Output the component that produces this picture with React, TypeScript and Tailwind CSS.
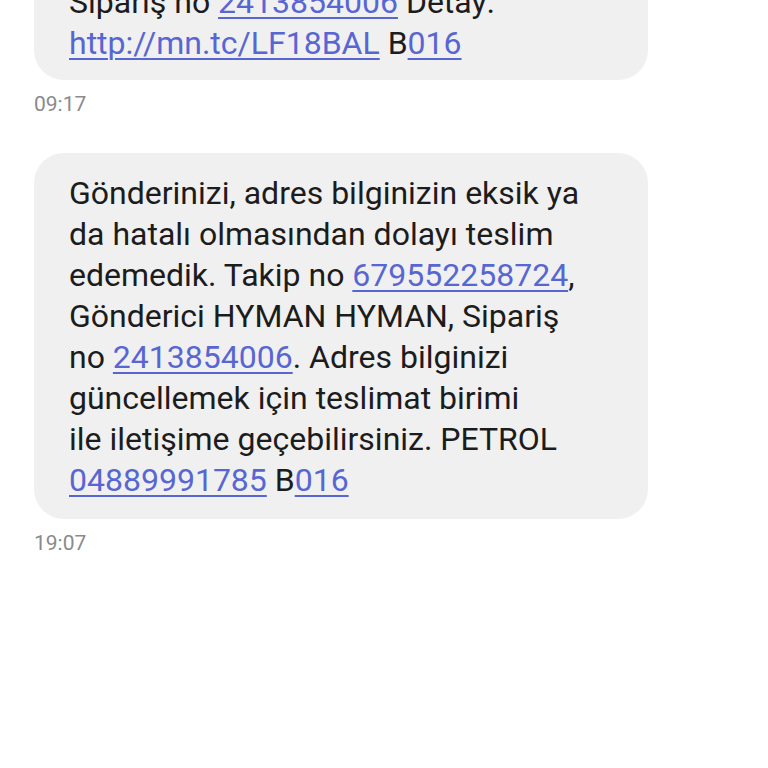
import React from "react";

const Link = ({ children }: { children: React.ReactNode }) => (
  <span className="text-[#5866d3] underline decoration-[1.5px] underline-offset-[4px]">
    {children}
  </span>
);

export default function App() {
  return (
    <div
      className="h-[768px] w-[768px] overflow-hidden bg-white text-[#1c1c1c]"
      style={{ fontFamily: "Roboto, 'Noto Sans', sans-serif" }}
    >
      <div className="flex flex-col pl-[34px]">
        {/* first message, scrolled partly off the top */}
        <div className="-mt-[38px] w-[614px] rounded-[30px] bg-[#f0f0f0] pb-[16px] pl-[35px] pr-[30px] pt-[20px] text-[32px] leading-[41px]">
          <div>
            Sipariş no <Link>2413854006</Link> Detay:
          </div>
          <div>
            <Link>http://mn.tc/LF18BAL</Link> B<Link>016</Link>
          </div>
        </div>
        <div className="mt-[11px] text-[21px] leading-[26px] text-[#8a8a8a]">09:17</div>

        <div className="mt-[36px] w-[614px] rounded-[30px] bg-[#f0f0f0] pb-[18px] pl-[35px] pr-[30px] pt-[20px] text-[32px] leading-[41px]">
          <div>Gönderinizi, adres bilginizin eksik ya</div>
          <div>da hatalı olmasından dolayı teslim</div>
          <div>
            edemedik. Takip no <Link>679552258724</Link>,
          </div>
          <div>Gönderici HYMAN HYMAN, Sipariş</div>
          <div>
            no <Link>2413854006</Link>. Adres bilginizi
          </div>
          <div>güncellemek için teslimat birimi</div>
          <div>ile iletişime geçebilirsiniz. PETROL</div>
          <div>
            <Link>04889991785</Link> B<Link>016</Link>
          </div>
        </div>
        <div className="mt-[11px] text-[21px] leading-[26px] text-[#8a8a8a]">19:07</div>
      </div>
    </div>
  );
}
